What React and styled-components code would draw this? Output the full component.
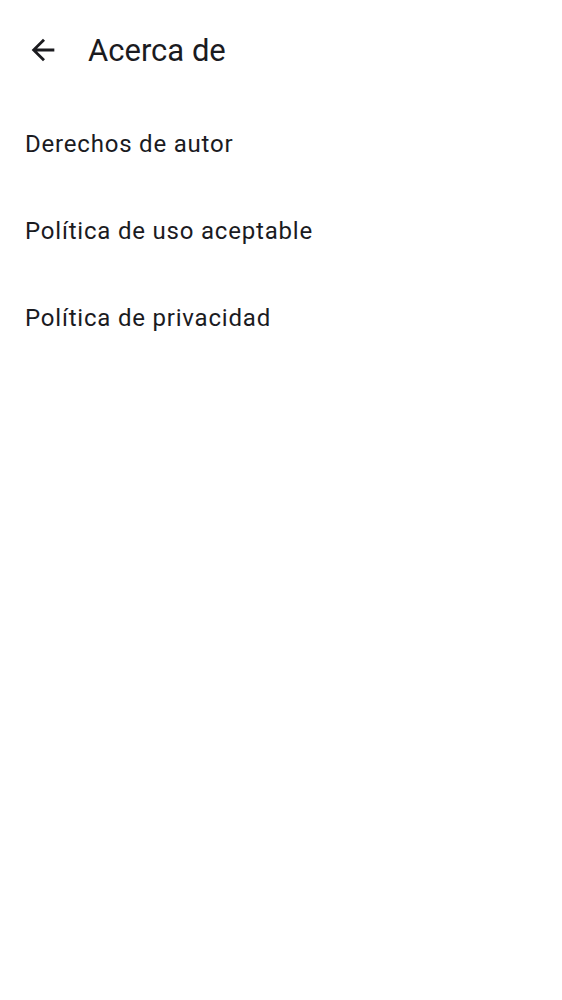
import React from 'react';
import styled, { createGlobalStyle } from 'styled-components';

const GlobalStyle = createGlobalStyle`
  body {
    margin: 0;
    background: #fff;
    font-family: Roboto, "Noto Sans", sans-serif;
  }
`;

const Page = styled.div`
  width: 562px;
  min-height: 1000px;
  background: #fff;
  color: #1b1b1f;
`;

const TopBar = styled.header`
  display: flex;
  align-items: center;
  height: 100px;
  padding-left: 26px;
  box-sizing: border-box;
`;

const BackButton = styled.button`
  display: flex;
  align-items: center;
  justify-content: center;
  width: 34px;
  height: 34px;
  padding: 0;
  border: none;
  background: none;
  color: #1b1b1f;
  cursor: pointer;
`;

const Title = styled.h1`
  margin: 0 0 0 28px;
  font-size: 31px;
  font-weight: 400;
  letter-spacing: 0;
`;

const Menu = styled.ul`
  list-style: none;
  margin: 0;
  padding: 0;
`;

const Item = styled.li`
  display: flex;
  align-items: center;
  height: 87px;
  padding-left: 25px;
  font-size: 24px;
  letter-spacing: 0.8px;
  cursor: pointer;
`;

const items = ['Derechos de autor', 'Política de uso aceptable', 'Política de privacidad'];

const App = () => (
  <Page>
    <GlobalStyle />
    <TopBar>
      <BackButton aria-label="Volver">
        <svg width="34" height="34" viewBox="0 0 24 24" fill="currentColor">
          <path d="M20 11H7.83l5.59-5.59L12 4l-8 8 8 8 1.41-1.41L7.83 13H20v-2z" />
        </svg>
      </BackButton>
      <Title>Acerca de</Title>
    </TopBar>
    <Menu>
      {items.map((label) => (
        <Item key={label}>{label}</Item>
      ))}
    </Menu>
  </Page>
);

export default App;
